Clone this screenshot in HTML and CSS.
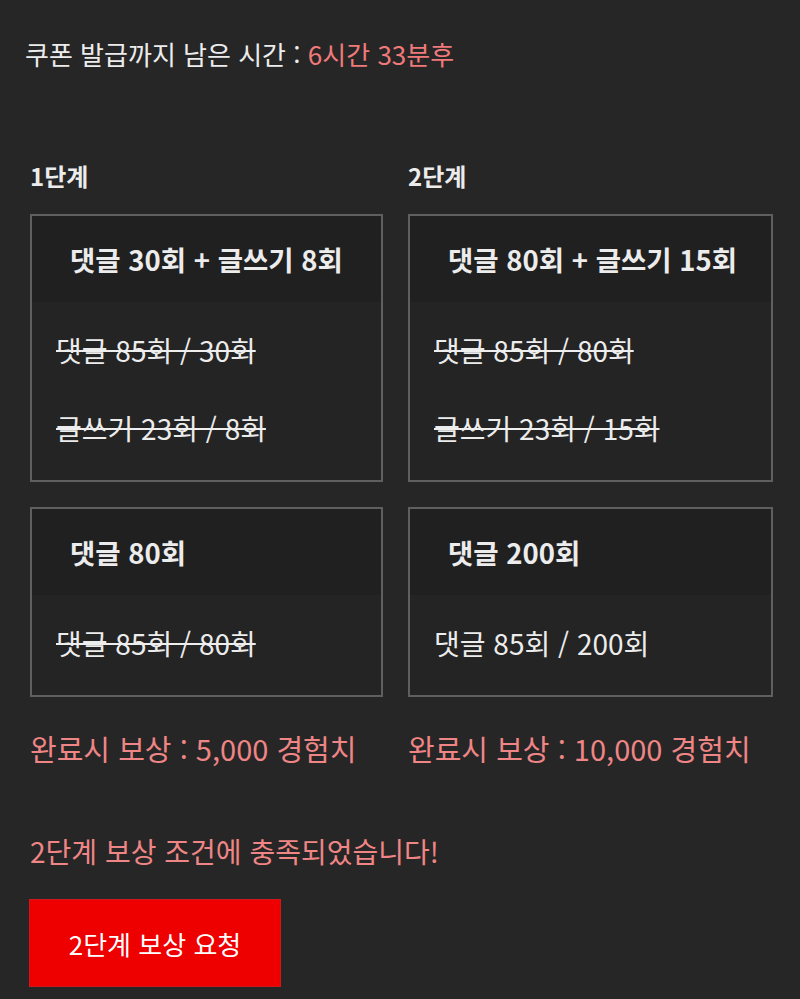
FILE: index.html
```html
<!DOCTYPE html>
<html lang="ko">
<head>
<meta charset="utf-8">
<link rel="stylesheet" href="styles.css">
</head>
<body>
<div class="timer">쿠폰 발급까지 남은 시간 : <span class="hl">6시간 33분후</span></div>
<div class="stages">
  <div class="col col-1">
    <div class="label">1단계</div>
    <div class="card">
      <div class="card-head">댓글 30회 + 글쓰기 8회</div>
      <div class="card-body">
        <div class="line done">댓글 85회 / 30회</div>
        <div class="line done">글쓰기 23회 / 8회</div>
      </div>
    </div>
    <div class="card">
      <div class="card-head">댓글 80회</div>
      <div class="card-body">
        <div class="line done">댓글 85회 / 80회</div>
      </div>
    </div>
    <div class="reward">완료시 보상 : 5,000 경험치</div>
  </div>
  <div class="col col-2">
    <div class="label">2단계</div>
    <div class="card">
      <div class="card-head">댓글 80회 + 글쓰기 15회</div>
      <div class="card-body">
        <div class="line done">댓글 85회 / 80회</div>
        <div class="line done">글쓰기 23회 / 15회</div>
      </div>
    </div>
    <div class="card">
      <div class="card-head">댓글 200회</div>
      <div class="card-body">
        <div class="line">댓글 85회 / 200회</div>
      </div>
    </div>
    <div class="reward">완료시 보상 : 10,000 경험치</div>
  </div>
</div>
<div class="notice">2단계 보상 조건에 충족되었습니다!</div>
<button class="request">2단계 보상 요청</button>
</body>
</html>
```
FILE: styles.css
```css
html, body {
  margin: 0;
  padding: 0;
  background: #262626;
}
body {
  font-family: "Noto Sans CJK KR", "Noto Sans", sans-serif;
  color: #ececec;
  height: 999px;
  overflow: hidden;
}
.timer {
  margin: 34px 0 0 25px;
  font-size: 26px;
  line-height: 40px;
  white-space: nowrap;
}
.hl {
  color: #f07a7a;
}
.stages {
  display: flex;
  gap: 25px;
  margin: 87px 0 0 30px;
}
.col {
  display: flex;
  flex-direction: column;
}
.col-1 { width: 353px; }
.col-2 { width: 365px; }
.label {
  font-size: 24px;
  font-weight: bold;
  line-height: 30px;
  height: 30px;
  margin-bottom: 23px;
}
.card {
  border: 2px solid #5f5f5f;
  background: #242424;
  margin-bottom: 25px;
}
.card-head {
  height: 86px;
  line-height: 86px;
  padding-left: 38px;
  background: #202020;
  font-size: 27.5px;
  font-weight: bold;
  white-space: nowrap;
}
.card-body {
  display: flex;
  flex-direction: column;
  gap: 38px;
  padding: 28px 0 32px 24px;
}
.line {
  font-size: 28px;
  line-height: 40px;
  height: 40px;
  white-space: nowrap;
}
.done {
  text-decoration: line-through;
  text-decoration-thickness: 2px;
  text-decoration-color: #eeeeee;
}
.reward {
  margin-top: 6px;
  font-size: 29px;
  line-height: 40px;
  color: #ef8585;
  white-space: nowrap;
}
.notice {
  margin: 63px 0 0 30px;
  font-size: 28px;
  line-height: 40px;
  color: #ef8585;
  white-space: nowrap;
}
.request {
  display: block;
  margin: 28px 0 0 29px;
  width: 252px;
  height: 88px;
  background: #ee0000;
  border: 1px solid #d01818;
  color: #ffffff;
  font-family: "Noto Sans CJK KR", "Noto Sans", sans-serif;
  font-size: 26px;
  padding: 0;
}
```
